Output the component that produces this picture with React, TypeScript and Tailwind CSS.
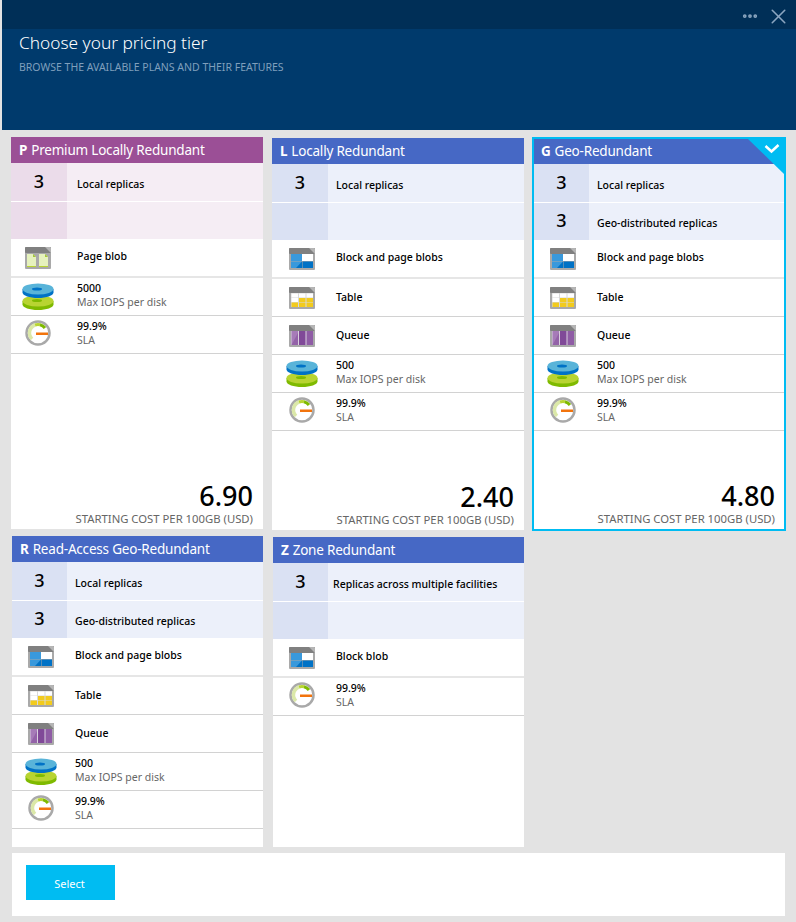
import { Ellipsis, X } from 'lucide-react';
import type { ReactNode } from 'react';

function Tile({ children }: { children: ReactNode }) {
    return (
        <svg width="26" height="22" viewBox="0 0 26 22">
            <rect width="26" height="22" rx="1" fill="#a9a9a9" />
            <rect width="26" height="6" rx="1" fill="#808080" />
            <path d="M20 0h5a1 1 0 0 1 1 1v5z" fill="#b5b5b5" />
            {children}
        </svg>
    );
}

function BlobIcon() {
    return (
        <Tile>
            <rect x="2" y="6" width="11" height="7" fill="#3999dc" />
            <rect x="13" y="6" width="11" height="7" fill="#fff" />
            <rect x="2" y="13.5" width="11" height="6.5" fill="#3999dc" />
            <path d="M13 13.5V20H7z" fill="#0072c6" />
            <rect x="13.5" y="13.5" width="10.5" height="6.5" fill="#0072c6" />
        </Tile>
    );
}

function TableIcon() {
    return (
        <Tile>
            <rect x="2" y="6" width="22" height="14" fill="#d9d9d9" />
            <rect x="2.5" y="6.5" width="6.5" height="4" fill="#fff" />
            <rect x="10" y="6.5" width="6.5" height="4" fill="#fff" />
            <rect x="17.5" y="6.5" width="6.5" height="4" fill="#fff" />
            <rect x="2.5" y="11" width="6.5" height="4" fill="#fff" />
            <rect x="10" y="11" width="6.5" height="4" fill="#f2cb1d" />
            <rect x="17.5" y="11" width="6.5" height="4" fill="#f2cb1d" />
            <rect x="2.5" y="15.5" width="6.5" height="4.5" fill="#f2cb1d" />
            <rect x="10" y="15.5" width="6.5" height="4.5" fill="#f2cb1d" />
            <rect x="17.5" y="15.5" width="6.5" height="4.5" fill="#f2cb1d" />
        </Tile>
    );
}

function QueueIcon() {
    return (
        <Tile>
            <rect x="2" y="6" width="22" height="14" fill="#d9d0de" />
            <rect x="2.5" y="6" width="6.5" height="14" fill="#a67bb8" />
            <rect x="10" y="6" width="6.5" height="14" fill="#804998" />
            <rect x="17.5" y="6" width="6.5" height="14" fill="#8f5ca5" />
            <path d="M2.5 20L9 8v12z" fill="#804998" opacity="0.5" />
        </Tile>
    );
}

function PageIcon() {
    return (
        <Tile>
            <path d="M2 7h6l3 3v10H2z" fill="#e6f2bd" />
            <path d="M8 7l3 3H8z" fill="#a4c639" />
            <path d="M14 7h6l3 3v10h-9z" fill="#e6f2bd" />
            <path d="M20 7l3 3h-3z" fill="#a4c639" />
            <path d="M2 19h9v1H2zM14 19h9v1h-9z" fill="#b8d432" />
        </Tile>
    );
}

function DiskIcon() {
    return (
        <svg width="32" height="27" viewBox="0 0 32 27">
            <path d="M0.5 18v3.5C0.5 24.5 7.5 27 16 27s15.5-2.5 15.5-5.5V18z" fill="#7fba00" />
            <ellipse cx="16" cy="18" rx="15.5" ry="5.5" fill="#b8d432" />
            <ellipse cx="15" cy="17.5" rx="5" ry="1.5" fill="#7fba00" />
            <path d="M0.5 6v3.5C0.5 12.5 7.5 15 16 15s15.5-2.5 15.5-5.5V6z" fill="#0072c6" />
            <ellipse cx="16" cy="6" rx="15.5" ry="5.5" fill="#59b4d9" />
            <ellipse cx="15" cy="6" rx="5" ry="1.5" fill="#0072c6" />
        </svg>
    );
}

function GaugeIcon() {
    return (
        <svg width="26" height="26" viewBox="0 0 26 26">
            <circle cx="13" cy="13" r="11.5" fill="#fff" stroke="#a9a9a9" strokeWidth="2.5" />
            <path d="M7 19A8.5 8.5 0 0 1 10 5" fill="none" stroke="#dbe8a8" strokeWidth="3.5" />
            <path d="M10 5A8.5 8.5 0 0 1 15 4.7" fill="none" stroke="#b8d432" strokeWidth="3" />
            <path d="M15 4.7A8.5 8.5 0 0 1 20 8" fill="none" stroke="#7fba00" strokeWidth="3" />
            <rect x="11" y="12.5" width="12" height="2.5" fill="#f2740d" />
        </svg>
    );
}

type Row =
    | { kind: 'count'; value?: string; label?: string }
    | { kind: 'icon'; icon: ReactNode; label: string; first?: boolean }
    | { kind: 'stat'; icon: ReactNode; value: string; label: string; gauge?: boolean };

type Theme = { head: string; side: string; body: string };

const purple: Theme = { head: 'bg-[#9b4f96]', side: 'bg-[#ebdcea]', body: 'bg-[#f5edf4]' };
const blue: Theme = { head: 'bg-[#4668c5]', side: 'bg-[#dae1f3]', body: 'bg-[#ecf0fa]' };

const blobs: Row = { kind: 'icon', icon: <BlobIcon />, label: 'Block and page blobs', first: true };
const table: Row = { kind: 'icon', icon: <TableIcon />, label: 'Table' };
const queue: Row = { kind: 'icon', icon: <QueueIcon />, label: 'Queue' };
const iops500: Row = { kind: 'stat', icon: <DiskIcon />, value: '500', label: 'Max IOPS per disk' };
const sla: Row = { kind: 'stat', icon: <GaugeIcon />, value: '99.9%', label: 'SLA', gauge: true };

type Insets = { side: string; label: string; icon: string };

function TierRow({ row, theme, insets, index }: { row: Row; theme: Theme; insets: Insets; index: number }) {
    if (row.kind === 'count') {
        return (
            <div className={`flex ${index === 0 ? 'h-[39px] border-b border-white' : 'h-[37px]'} ${theme.body}`}>
                <div className={`flex items-start justify-center text-[18px] leading-[30px] font-medium text-black ${index === 0 ? 'pt-[3px]' : 'pt-[2px]'} ${insets.side} ${theme.side}`}>{row.value}</div>
                {row.label && <div className={`flex items-center text-[10.5px] font-medium text-black ${index === 0 ? 'pt-[6px]' : 'pt-[4px]'} ${insets.label}`}>{row.label}</div>}
            </div>
        );
    }
    const first = row.kind === 'icon' && row.first;
    return (
        <div className={`flex items-center bg-white ${first ? 'h-[39px] border-b-2 border-[#e6e6e6]' : 'h-[38px] border-b border-[#d2d2d2]'}`}>
            <div className={`flex shrink-0 justify-center ${insets.icon} ${row.kind === 'stat' && row.gauge ? '-mt-[3px]' : ''}`}>{row.icon}</div>
            {row.kind === 'icon' ? (
                <div className={`text-[10.5px] font-medium text-black ${first ? '-mt-[2px]' : ''}`}>{row.label}</div>
            ) : (
                <div className="-mt-[4px] flex flex-col text-[10.5px] leading-[14px]">
                    <span className="font-medium text-black">{row.value}</span>
                    <span className="text-[#666]">{row.label}</span>
                </div>
            )}
        </div>
    );
}

function TierCard({
    letter,
    name,
    theme,
    rows,
    price,
    selected,
    className,
    insets,
}: {
    letter: string;
    name: string;
    theme: Theme;
    rows: Row[];
    price?: string;
    selected?: boolean;
    className?: string;
    insets: Insets;
}) {
    return (
        <div className={`relative flex flex-col bg-white ${selected ? 'border-2 border-[#00bcf2]' : ''} ${className ?? ''}`}>
            <div className={`flex shrink-0 items-center gap-[4px] text-[13.5px] tracking-[-0.2px] text-white ${theme.head} ${selected ? 'h-[25px] pl-[7px]' : 'h-[26px] pl-[8px]'}`}>
                <b>{letter}</b>
                <span>{name}</span>
            </div>
            {rows.map((row, i) => (
                <TierRow key={i} row={row} theme={theme} insets={insets} index={i} />
            ))}
            {price && (
                <div className={`mt-auto flex flex-col items-end pb-[2px] ${selected ? 'pr-[9px]' : 'pr-[10px]'}`}>
                    <div className="text-[27px] leading-[30px] font-medium text-black">{price}</div>
                    <div className="text-[11.3px] leading-[16px] text-[#666]">STARTING COST PER 100GB (USD)</div>
                </div>
            )}
            {selected && (
                <svg className="absolute top-0 right-0" width="36" height="35" viewBox="0 0 36 35">
                    <path d="M0 0h36v35z" fill="#00bcf2" />
                    <path d="M17.5 7l6 5.5 7-6.5" fill="none" stroke="#fff" strokeWidth="2.5" />
                </svg>
            )}
        </div>
    );
}

export default function App() {
    const geoRows: Row[] = [
        { kind: 'count', value: '3', label: 'Local replicas' },
        { kind: 'count', value: '3', label: 'Geo-distributed replicas' },
        blobs,
        table,
        queue,
        iops500,
        sla,
    ];

    return (
        <div className="flex h-[922px] w-[796px] flex-col overflow-hidden bg-[#e3e3e3] font-['Noto_Sans','Open_Sans',sans-serif]">
            <header className="ml-[2px] h-[130px] shrink-0 bg-[#003a6c]">
                <div className="flex h-[29px] items-center justify-end gap-[7px] bg-[#002f57] pt-[3px] pr-[5px] text-[#8ba6c0]">
                    <Ellipsis className="h-[18px] w-[18px]" strokeWidth={3} />
                    <X className="h-[25px] w-[25px]" strokeWidth={1.5} />
                </div>
                <h1 className="mt-[2px] pl-[17px] text-[17.3px] leading-[24px] font-light text-white">Choose your pricing tier</h1>
                <p className="mt-[5px] pl-[17px] text-[10.5px] leading-[14px] text-[#7f9fbc]">BROWSE THE AVAILABLE PLANS AND THEIR FEATURES</p>
            </header>

            <div className="grid grid-cols-[252px_252px_253px] gap-x-[9px] pt-[7px] pl-[11px]">
                <TierCard
                    letter="P"
                    name="Premium Locally Redundant"
                    theme={purple}
                    className="h-[392px]"
                    price="6.90"
                    insets={{ side: 'w-[56px]', label: 'ml-[10px]', icon: 'w-[66px] pr-[12px]' }}
                    rows={[
                        { kind: 'count', value: '3', label: 'Local replicas' },
                        { kind: 'count' },
                        { kind: 'icon', icon: <PageIcon />, label: 'Page blob', first: true },
                        { kind: 'stat', icon: <DiskIcon />, value: '5000', label: 'Max IOPS per disk' },
                        sla,
                    ]}
                />
                <TierCard
                    letter="L"
                    name="Locally Redundant"
                    theme={blue}
                    className="mt-px h-[392px]"
                    price="2.40"
                    insets={{ side: 'w-[56px]', label: 'ml-[8px]', icon: 'w-[64px] pr-[4px]' }}
                    rows={[{ kind: 'count', value: '3', label: 'Local replicas' }, { kind: 'count' }, blobs, table, queue, iops500, sla]}
                />
                <TierCard
                    letter="G"
                    name="Geo-Redundant"
                    theme={blue}
                    selected
                    className="-ml-px h-[394px]"
                    price="4.80"
                    insets={{ side: 'w-[55px]', label: 'ml-[8px]', icon: 'w-[63px] pr-[5px]' }}
                    rows={geoRows}
                />
                <TierCard
                    letter="R"
                    name="Read-Access Geo-Redundant"
                    theme={blue}
                    className="mt-[5px] ml-px h-[311px]"
                    insets={{ side: 'w-[55px]', label: 'ml-[8px]', icon: 'w-[63px] pr-[5px]' }}
                    rows={geoRows}
                />
                <TierCard
                    letter="Z"
                    name="Zone Redundant"
                    theme={blue}
                    className="mt-[6px] ml-px h-[310px]"
                    insets={{ side: 'w-[55px]', label: 'ml-[5px]', icon: 'w-[63px] pr-[5px]' }}
                    rows={[
                        { kind: 'count', value: '3', label: 'Replicas across multiple facilities' },
                        { kind: 'count' },
                        { kind: 'icon', icon: <BlobIcon />, label: 'Block blob', first: true },
                        sla,
                    ]}
                />
            </div>

            <div className="mt-[6px] ml-[12px] h-[63px] w-[773px] bg-white pt-[12px] pl-[14px]">
                <button className="flex h-[35px] w-[89px] items-center justify-center bg-[#00bcf2] pt-[3px] pr-[2px] text-[11px] text-white">Select</button>
            </div>
        </div>
    );
}
